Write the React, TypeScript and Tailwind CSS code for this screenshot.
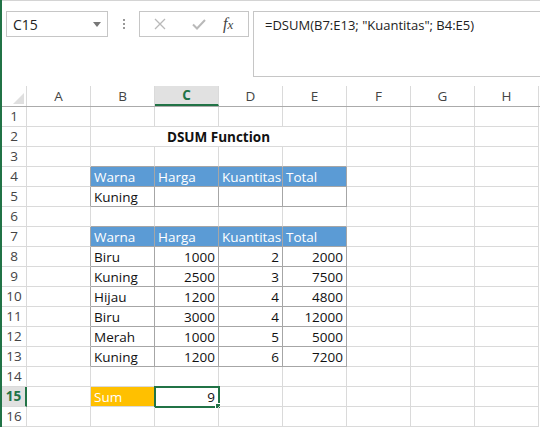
import React from 'react';

const COLS = ['A', 'B', 'C', 'D', 'E', 'F', 'G', 'H'];

type Cell = { text?: string; align?: 'left' | 'right'; fill?: 'blue' | 'gold' };

const header = ['Warna', 'Harga', 'Kuantitas', 'Total'];

const data: [string, number, number, number][] = [
  ['Biru', 1000, 2, 2000],
  ['Kuning', 2500, 3, 7500],
  ['Hijau', 1200, 4, 4800],
  ['Biru', 3000, 4, 12000],
  ['Merah', 1000, 5, 5000],
  ['Kuning', 1200, 6, 7200],
];

// rows 1..16, columns A..H (index 0..7)
function cellAt(row: number, col: number): Cell {
  if ((row === 4 || row === 7) && col >= 1 && col <= 4) {
    return { text: header[col - 1], fill: 'blue' };
  }
  if (row === 5 && col === 1) return { text: 'Kuning' };
  if (row >= 8 && row <= 13 && col >= 1 && col <= 4) {
    const r = data[row - 8];
    if (col === 1) return { text: r[0] };
    return { text: String(r[col - 1]), align: 'right' };
  }
  if (row === 15 && col === 1) return { text: 'Sum', fill: 'gold' };
  if (row === 15 && col === 2) return { text: '9', align: 'right' };
  return {};
}

// cells with a drawn table border
function boxed(row: number, col: number) {
  if (col < 1 || col > 4) return false;
  return row === 4 || row === 5 || (row >= 7 && row <= 13);
}

function SheetCell({ row, col }: { row: number; col: number }) {
  const c = cellAt(row, col);
  const darkRight = boxed(row, col) || boxed(row, col + 1);
  const darkBottom = boxed(row, col) || boxed(row + 1, col);
  const selected = row === 15 && col === 2;
  return (
    <div
      className={[
        'relative w-[64px] h-[20px] shrink-0 border-r border-b whitespace-nowrap px-[3px] leading-[20px]',
        darkRight ? 'border-r-[#a6a6a6]' : 'border-r-[#dadada]',
        darkBottom ? 'border-b-[#a6a6a6]' : 'border-b-[#dadada]',
        c.fill === 'blue' ? 'bg-[#5b9bd5] text-white' : '',
        c.fill === 'gold' ? 'bg-[#ffc000] text-white' : '',
        c.align === 'right' ? 'text-right' : 'text-left',
        selected ? 'outline-2 outline-[#217346] -outline-offset-1 overflow-visible' : 'overflow-hidden',
      ].join(' ')}
    >
      {c.text}
      {selected && <span className="absolute -right-[3px] -bottom-[3px] w-[6px] h-[6px] bg-[#217346] border border-white" />}
    </div>
  );
}

export default function App() {
  const rows = Array.from({ length: 16 }, (_, i) => i + 1);
  return (
    <div
      className="w-[540px] h-[427px] overflow-hidden bg-white flex text-[#111] text-[13.5px]"
      style={{ fontFamily: '"Open Sans", "Liberation Sans", sans-serif' }}
    >
      <div className="w-[2px] shrink-0 bg-[#217346]" />
      <div className="flex-1 flex flex-col min-w-0">
        {/* formula bar */}
        <div className="h-[86px] shrink-0 border-t border-[#d4d4d4] flex items-start pt-[10px]">
          <div className="ml-[4px] w-[102px] h-[26px] border border-[#c6c6c6] flex items-center justify-between px-[6px]">
            <span className="text-[14px] text-[#222]">C15</span>
            <svg width="8" height="5" viewBox="0 0 8 5"><path d="M0 0h8L4 5z" fill="#777" /></svg>
          </div>
          <div className="w-[31px] h-[26px] flex flex-col items-center justify-center gap-[2px]">
            <span className="w-[2px] h-[2px] bg-[#999]" />
            <span className="w-[2px] h-[2px] bg-[#999]" />
            <span className="w-[2px] h-[2px] bg-[#999]" />
          </div>
          <div className="w-[110px] h-[26px] border border-[#c6c6c6] flex items-center pl-[12px]">
            <svg width="12" height="12" viewBox="0 0 12 12" className="ml-[2px]">
              <path d="M1 1l10 10M11 1L1 11" stroke="#b9b9b9" strokeWidth="1.3" />
            </svg>
            <svg width="14" height="12" viewBox="0 0 14 12" className="ml-[26px]">
              <path d="M1 6.5l4 4L13 2" stroke="#b9b9b9" strokeWidth="2" fill="none" />
            </svg>
            <span
              className="ml-[17px] text-[16px] italic text-[#444]"
              style={{ fontFamily: '"Liberation Serif", serif' }}
            >
              f<span className="text-[13px]">x</span>
            </span>
          </div>
          <div className="ml-[4px] flex-1 h-[66px] border border-r-0 border-[#c6c6c6] pl-[11px] pt-[4px] text-[13px] text-[#222]">
            =DSUM(B7:E13; "Kuantitas"; B4:E5)
          </div>
        </div>

        {/* column headers */}
        <div className="flex h-[21px] shrink-0 border-b border-[#ababab]">
          <div className="w-[25px] shrink-0 border-r border-[#dadada] flex items-end justify-end p-[2px]">
            <svg width="11" height="11" viewBox="0 0 11 11"><path d="M11 0v11H0z" fill="#dfdfdf" /></svg>
          </div>
          {COLS.map((c) => (
            <div
              key={c}
              className={
                c === 'C'
                  ? 'w-[64px] shrink-0 border-r border-[#dadada] bg-[#e1e1e1] text-[#217346] font-bold flex items-center justify-center border-b-2 border-b-[#217346]'
                  : 'w-[64px] shrink-0 border-r border-[#dadada] text-[#444] flex items-center justify-center'
              }
            >
              {c}
            </div>
          ))}
        </div>

        {/* rows */}
        {rows.map((r) => (
          <div key={r} className="flex h-[20px] shrink-0">
            <div
              className={
                r === 15
                  ? 'w-[25px] h-[20px] shrink-0 border-b border-[#dadada] border-r-2 border-r-[#217346] bg-[#e1e1e1] text-[#217346] font-bold flex items-center justify-center'
                  : 'w-[25px] h-[20px] shrink-0 border-b border-r border-[#dadada] text-[#444] flex items-center justify-center'
              }
            >
              {r}
            </div>
            {r === 2 ? (
              <>
                <SheetCell row={r} col={0} />
                <div className="w-[256px] h-[20px] shrink-0 border-r border-b border-[#dadada] text-center font-bold leading-[20px]">
                  DSUM Function
                </div>
                {[5, 6, 7].map((c) => (
                  <SheetCell key={c} row={r} col={c} />
                ))}
              </>
            ) : (
              COLS.map((_, c) => <SheetCell key={c} row={r} col={c} />)
            )}
          </div>
        ))}
      </div>
    </div>
  );
}
